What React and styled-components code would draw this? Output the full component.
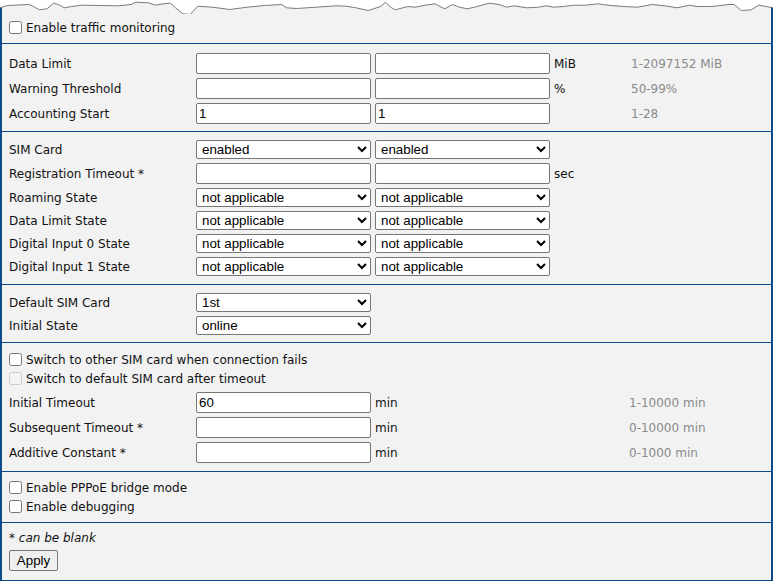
import React from "react";
import styled, { createGlobalStyle } from "styled-components";

const Global = createGlobalStyle`
  html, body { margin: 0; padding: 0; background: #ffffff; }
  body { font-family: "DejaVu Sans", Verdana, sans-serif; font-size: 12px; color: #111; }
`;

const BLUE = "#0d4a89";

const Page = styled.div`
  width: 774px;
  height: 581px;
  overflow: hidden;
`;

const TornSvg = styled.svg`
  display: block;
  width: 774px;
  height: 14px;
`;

const Panel = styled.div`
  width: 773px;
  box-sizing: border-box;
  background: #f2f2f2;
  border-left: 2px solid ${BLUE};
  border-right: 2px solid ${BLUE};
  border-bottom: 2px solid ${BLUE};
`;

const Section = styled.div`
  padding: ${(p) => p.$pad || "8px 0 8px 0"};
  padding-left: 7px;
  border-top: ${(p) => (p.$first ? "none" : `1px solid ${BLUE}`)};
  display: flex;
  flex-direction: column;
  gap: ${(p) => p.$gap || "0px"};
`;

const Grid = styled.div`
  display: grid;
  grid-template-columns: ${(p) => p.$cols};
  column-gap: 4px;
  row-gap: 4px;
  align-items: center;
  margin-top: ${(p) => p.$mt || "0px"};
`;

const Label = styled.div`
  white-space: nowrap;
  line-height: 14px;
`;

const Unit = styled.div`
  white-space: nowrap;
`;

const Hint = styled.div`
  color: #8a8a8a;
  white-space: nowrap;
`;

const TextInput = styled.input`
  box-sizing: border-box;
  width: 175px;
  height: 21px;
  margin: 0;
  padding: 1px 2px;
  border: 1px solid #767676;
  border-radius: 2px;
  background: #fff;
  font-family: "Liberation Sans", Arial, sans-serif;
  font-size: 13.33px;
  color: #000;
`;

const Select = styled.select`
  box-sizing: border-box;
  width: 175px;
  height: 19px;
  margin: 0;
  border: 1px solid #767676;
  border-radius: 2px;
  background: #fff;
  font-family: "Liberation Sans", Arial, sans-serif;
  font-size: 13.33px;
  color: #000;
  padding: 0 0 0 1px;
`;

const CheckRow = styled.label`
  display: flex;
  align-items: center;
  height: 19px;
  white-space: nowrap;
`;

const Check = styled.input.attrs({ type: "checkbox" })`
  width: 13px;
  height: 13px;
  margin: 0 4px 0 0;
`;

const Note = styled.div`
  font-style: italic;
  height: 16px;
  line-height: 16px;
`;

const Button = styled.button`
  align-self: flex-start;
  box-sizing: border-box;
  width: 49px;
  height: 21px;
  margin: 0;
  padding: 0;
  border: 1px solid #767676;
  border-radius: 2px;
  background: #efefef;
  font-family: "Liberation Sans", Arial, sans-serif;
  font-size: 13.33px;
  color: #000;
`;

const PTS = [
  [0, 22], [15, 15], [60, 12], [70, 20], [80, 28], [95, 25], [108, 8], [118, 12], [130, 22], [145, 18],
  [165, 14], [200, 15], [240, 16], [265, 12], [275, 5], [300, 7], [315, 14], [330, 10], [345, 8],
  [355, 22], [370, 40], [385, 42], [400, 17], [430, 20], [465, 27], [500, 20], [535, 15], [570, 12],
  [580, 22], [600, 24], [640, 20], [680, 16], [700, 17], [720, 22], [745, 30], [770, 18], [780, 5],
  [790, 20], [800, 28], [815, 22], [825, 18], [840, 20], [860, 14], [880, 10], [890, 18], [900, 25],
  [915, 12], [930, 20], [945, 25], [960, 20], [990, 8], [1010, 12], [1025, 20], [1040, 16], [1065, 22],
  [1090, 20], [1105, 16], [1120, 20], [1140, 18], [1160, 14], [1185, 14], [1210, 10], [1230, 14],
  [1260, 18], [1290, 20], [1320, 12], [1345, 16], [1370, 22], [1395, 14], [1410, 18], [1440, 18],
  [1475, 12], [1485, 12], [1500, 30], [1520, 28], [1535, 14], [1550, 18], [1564, 22],
];

function TornEdge() {
  const pts = PTS.map(([x, y]) => [Math.min(773, (x * 773) / 1564), y / 3 + 0.5]);
  const line = pts.map(([x, y]) => `${x.toFixed(1)},${y.toFixed(1)}`).join(" ");
  const fill = `0,14 ${line} 773,14`;
  const yl = pts[0][1];
  const yr = pts[pts.length - 1][1];
  return (
    <TornSvg viewBox="0 0 774 14" aria-hidden="true">
      <polygon points={fill} fill="#f2f2f2" />
      <polyline points={line} fill="none" stroke="#7a7a7a" strokeWidth="1" />
      <line x1="1" y1={yl} x2="1" y2="14" stroke={BLUE} strokeWidth="2" />
      <line x1="772" y1={yr} x2="772" y2="14" stroke={BLUE} strokeWidth="2" />
    </TornSvg>
  );
}

const COLS_A = "183px 175px 175px 73px 1fr";
const COLS_B = "183px 175px 175px 1fr";
const COLS_C = "183px 175px 250px 1fr";

const simRows = [
  "Roaming State",
  "Data Limit State",
  "Digital Input 0 State",
  "Digital Input 1 State",
];

export default function App() {
  return (
    <Page>
      <Global />
      <TornEdge />
      <Panel>
        <Section $first $pad="4px 0 6px 0">
          <CheckRow>
            <Check />
            Enable traffic monitoring
          </CheckRow>
        </Section>

        <Section $pad="9px 0 7px 0">
          <Grid $cols={COLS_A}>
            <Label>Data Limit</Label>
            <TextInput defaultValue="" />
            <TextInput defaultValue="" />
            <Unit>MiB</Unit>
            <Hint>1-2097152 MiB</Hint>

            <Label>Warning Threshold</Label>
            <TextInput defaultValue="" />
            <TextInput defaultValue="" />
            <Unit>%</Unit>
            <Hint>50-99%</Hint>

            <Label>Accounting Start</Label>
            <TextInput defaultValue="1" />
            <TextInput defaultValue="1" />
            <Unit></Unit>
            <Hint>1-28</Hint>
          </Grid>
        </Section>

        <Section $pad="8px 0 8px 0">
          <Grid $cols={COLS_B}>
            <Label>SIM Card</Label>
            <Select defaultValue="enabled">
              <option value="enabled">enabled</option>
              <option value="disabled">disabled</option>
            </Select>
            <Select defaultValue="enabled">
              <option value="enabled">enabled</option>
              <option value="disabled">disabled</option>
            </Select>
            <Unit></Unit>

            <Label>Registration Timeout *</Label>
            <TextInput defaultValue="" />
            <TextInput defaultValue="" />
            <Unit>sec</Unit>

            {simRows.map((r) => (
              <React.Fragment key={r}>
                <Label>{r}</Label>
                <Select defaultValue="na">
                  <option value="na">not applicable</option>
                </Select>
                <Select defaultValue="na">
                  <option value="na">not applicable</option>
                </Select>
                <Unit></Unit>
              </React.Fragment>
            ))}
          </Grid>
        </Section>

        <Section $pad="8px 0 7px 0">
          <Grid $cols={COLS_B}>
            <Label>Default SIM Card</Label>
            <Select defaultValue="1st">
              <option value="1st">1st</option>
              <option value="2nd">2nd</option>
            </Select>
            <div />
            <div />

            <Label>Initial State</Label>
            <Select defaultValue="online">
              <option value="online">online</option>
              <option value="offline">offline</option>
            </Select>
            <div />
            <div />
          </Grid>
        </Section>

        <Section $pad="7px 0 8px 0">
          <CheckRow>
            <Check />
            Switch to other SIM card when connection fails
          </CheckRow>
          <CheckRow>
            <Check disabled />
            Switch to default SIM card after timeout
          </CheckRow>
          <Grid $cols={COLS_C} $mt="4px">
            <Label>Initial Timeout</Label>
            <TextInput defaultValue="60" />
            <Unit>min</Unit>
            <Hint>1-10000 min</Hint>

            <Label>Subsequent Timeout *</Label>
            <TextInput defaultValue="" />
            <Unit>min</Unit>
            <Hint>0-10000 min</Hint>

            <Label>Additive Constant *</Label>
            <TextInput defaultValue="" />
            <Unit>min</Unit>
            <Hint>0-1000 min</Hint>
          </Grid>
        </Section>

        <Section $pad="6px 0 6px 0">
          <CheckRow>
            <Check />
            Enable PPPoE bridge mode
          </CheckRow>
          <CheckRow>
            <Check />
            Enable debugging
          </CheckRow>
        </Section>

        <Section $pad="7px 0 9px 0" $gap="4px">
          <Note>* can be blank</Note>
          <Button type="button">Apply</Button>
        </Section>
      </Panel>
    </Page>
  );
}
